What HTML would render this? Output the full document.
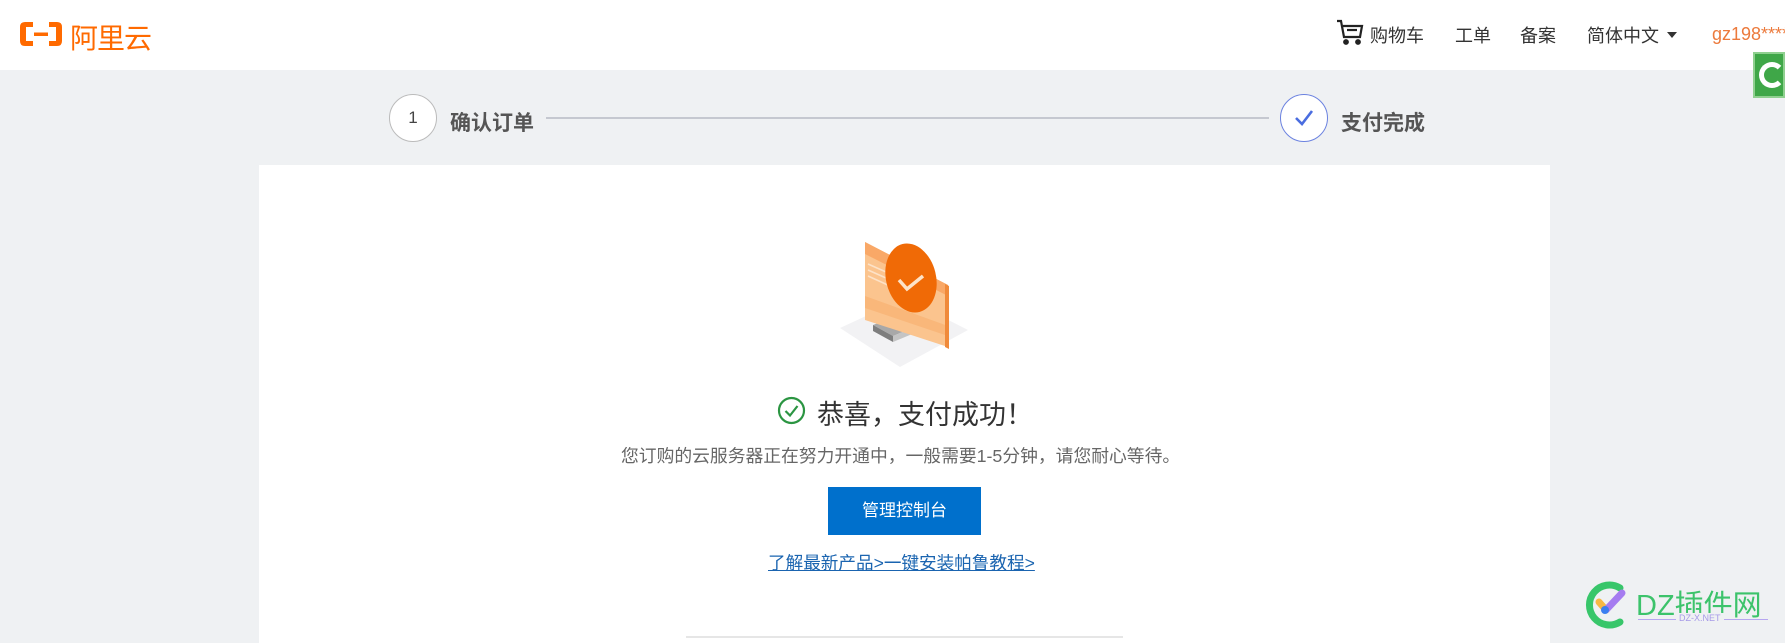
<!DOCTYPE html>
<html><head><meta charset="utf-8"><style>
*{margin:0;padding:0;box-sizing:border-box}
body{width:1785px;height:643px;overflow:hidden;background:#eff1f3;font-family:"Liberation Sans","Noto Sans CJK SC",sans-serif;position:relative}
.hdr{position:absolute;left:0;top:0;width:1785px;height:70px;background:#fff}
.a{position:absolute;white-space:nowrap}
.nav{font-size:18px;color:#333;top:22px}
.circ{position:absolute;width:48px;height:48px;border-radius:50%;background:#fff;border:1px solid #bbb;top:94px}
.card{position:absolute;left:259px;top:165px;width:1291px;height:478px;background:#fff}
</style></head><body>
<div class="hdr"></div>
<svg class="a" style="left:18px;top:20px" width="46" height="28" viewBox="0 0 46 28">
<path d="M15 2H7Q2 2 2 7V21Q2 26 7 26H15V21H8V7H15Z" fill="#ff6a00"/>
<path d="M31 2H39Q44 2 44 7V21Q44 26 39 26H31V21H38V7H31Z" fill="#ff6a00"/>
<rect x="16" y="12.5" width="14" height="3.5" fill="#ff6a00"/></svg>
<div class="a" style="left:70px;top:17px;font-size:28px;color:#ff6a00;letter-spacing:-1px">阿里云</div>
<svg class="a" style="left:1336px;top:18px" width="28" height="28" viewBox="0 0 28 28" fill="none" stroke="#222" stroke-width="2.2">
<path d="M1 3H5L8 19H24L26 8H7"/><path d="M11 12H21"/><circle cx="10" cy="24" r="1.8" fill="#222"/><circle cx="22" cy="24" r="1.8" fill="#222"/></svg>
<div class="a nav" style="left:1370px">购物车</div>
<div class="a nav" style="left:1455px">工单</div>
<div class="a nav" style="left:1520px">备案</div>
<div class="a nav" style="left:1587px">简体中文</div>
<div class="a" style="left:1667px;top:32px;border:5px solid transparent;border-top:6px solid #333"></div>
<div class="a nav" style="left:1712px;top:24px;color:#ec7a3c">gz198****</div>
<div class="a" style="left:1753px;top:52px;width:32px;height:46px;background:#3fa748;border:2px solid #8fd08f"><div style="margin:8px 0 0 4px;width:26px;height:26px;border:5px solid #fff;border-right-color:transparent;border-radius:50%"></div></div>

<div class="circ" style="left:389px"><div style="text-align:center;line-height:46px;font-size:17px;color:#444">1</div></div>
<div class="a" style="left:450px;top:107px;font-size:21px;font-weight:bold;color:#555">确认订单</div>
<div class="a" style="left:546px;top:117px;width:723px;height:2px;background:#c5c8d0"></div>
<div class="circ" style="left:1280px;border-color:#6b82e0"><svg width="46" height="46" viewBox="0 0 46 46"><path d="M15 23L21 29L31 16" fill="none" stroke="#4a6de0" stroke-width="2.6"/></svg></div>
<div class="a" style="left:1341px;top:107px;font-size:21px;font-weight:bold;color:#555">支付完成</div>

<div class="card"></div>
<svg class="a" style="left:835px;top:238px" width="140" height="135" viewBox="0 0 140 135">
<path d="M5 90L70 60L133 92L65 129Z" fill="#f2f2f4"/>
<path d="M38 87L62 78L82 88L58 98Z" fill="#a8a8a8"/>
<path d="M38 87L58 98L58 104L38 93Z" fill="#7e7e7e"/>
<path d="M58 98L82 88L82 94L58 104Z" fill="#c4c4c4"/>
<path d="M30 4L113 47L113 109L30 82Z" fill="#fbc48e"/>
<path d="M30 4L113 47L113 58L30 16Z" fill="#f9a867"/>
<path d="M30 58L113 88L113 98L30 70Z" fill="#f9b77a"/>
<path d="M33 26L60 38M33 32L60 44M33 38L55 48" stroke="#fde2c7" stroke-width="1.6"/>
<path d="M110 46L114 48L114 111L110 109Z" fill="#f08a3a"/>
<ellipse cx="76" cy="40" rx="25" ry="35" fill="#f06a06" transform="rotate(-14 76 40)"/>
<path d="M64 42L72 51L88 38" fill="none" stroke="#fde3c8" stroke-width="3.5"/>
</svg>
<svg class="a" style="left:777px;top:396px" width="29" height="29" viewBox="0 0 29 29"><circle cx="14.5" cy="14.5" r="12.5" fill="none" stroke="#2b9542" stroke-width="2.2"/><path d="M8.5 15L13 19.5L20.5 10" fill="none" stroke="#2b9542" stroke-width="2.2"/></svg>
<div class="a" style="left:817px;top:393px;font-size:27px;color:#333">恭喜，支付成功！</div>
<div class="a" style="left:621px;top:442px;font-size:17.8px;color:#666">您订购的云服务器正在努力开通中，一般需要1-5分钟，请您耐心等待。</div>
<div class="a" style="left:828px;top:487px;width:153px;height:48px;background:#0070cc;color:#fff;font-size:17px;line-height:48px;text-align:center">管理控制台</div>
<div class="a" style="left:768px;top:550px;font-size:17.6px;color:#1a64b0;text-decoration:underline">了解最新产品&gt;一键安装帕鲁教程&gt;</div>
<div class="a" style="left:686px;top:636px;width:437px;height:2px;background:#e6e6e6"></div>

<svg class="a" style="left:1584px;top:580px" width="50" height="50" viewBox="0 0 50 50"><path d="M36 8A20 20 0 1 0 36 42" fill="none" stroke="#38c66a" stroke-width="7" stroke-linecap="round"/><path d="M15 22L22 30" stroke="#f7b844" stroke-width="7" stroke-linecap="round"/><path d="M22 30L38 13" stroke="#a57cf0" stroke-width="7" stroke-linecap="round"/><circle cx="21" cy="30" r="4" fill="#3b7ff0"/></svg>
<div class="a" style="left:1636px;top:582px;font-size:29px;color:#3cc36b">DZ插件网</div>
<div class="a" style="left:1638px;top:619px;width:130px;height:1px;background:#b6a6f0"></div>
<div class="a" style="left:1676px;top:613px;font-size:9px;color:#a69ae8;background:#eff1f3;padding:0 3px">DZ-X.NET</div>
</body></html>
